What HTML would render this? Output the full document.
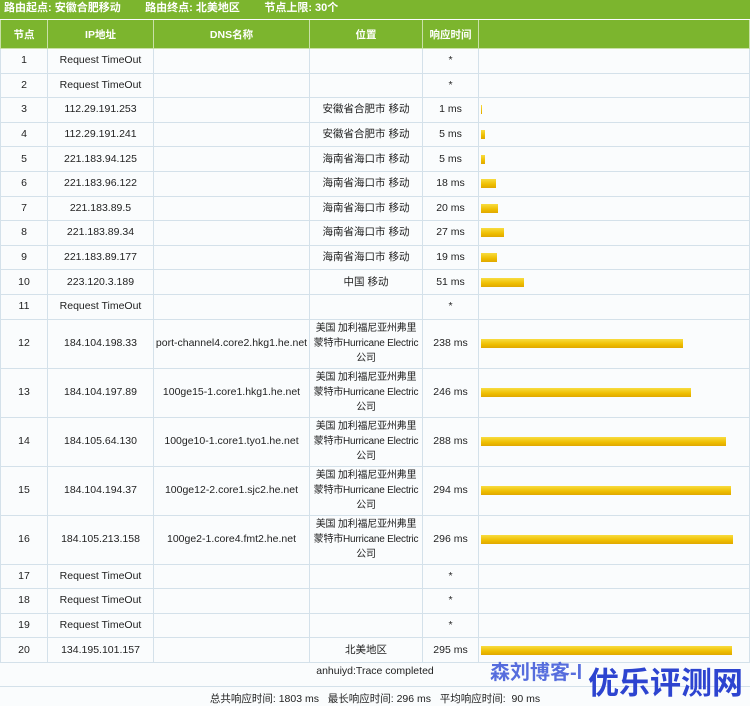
<!DOCTYPE html>
<html><head><meta charset="utf-8"><style>
body{margin:0;width:750px;height:706px;overflow:hidden;background:#fafcfd;font-family:"Liberation Sans","Noto Sans CJK SC",sans-serif;font-size:10.5px;color:#222;position:relative}
.top{height:19px;background:#7cb52e;color:#fff;font-weight:bold;font-size:11px;line-height:17px;padding-left:4px;white-space:pre}
table{position:absolute;top:20px;left:0;width:750px;border-collapse:collapse;table-layout:fixed}
th{background:#7cb52e;color:#fff;font-weight:bold;height:28px;border:1px solid #c9e0a8;border-top:none;font-size:10.5px;padding:0}
td{border:1px solid #d4e1ea;text-align:center;padding:0;line-height:15px;white-space:nowrap;overflow:hidden}
tr.s td{height:23.6px}
tr.b td{height:48px}
td.loc{font-size:10px;letter-spacing:-0.2px}
td.bar{text-align:left}
.g{display:block;height:9px;margin-left:2px;background:linear-gradient(#f8dc40,#eebe00 60%,#e0a800)}
.foot{position:absolute;left:0;width:750px;text-align:center;white-space:nowrap}
.wm1{position:absolute;left:490px;top:656px;color:#3a55d8;font-weight:bold;font-size:20px;opacity:.85;white-space:nowrap}
.wm2{position:absolute;left:588px;top:658px;color:#2d44d0;font-weight:bold;font-size:31px;white-space:nowrap}
</style></head><body>
<div class="top">路由起点: 安徽合肥移动        路由终点: 北美地区        节点上限: 30个</div>
<table>
<colgroup><col style="width:47px"><col style="width:106px"><col style="width:156px"><col style="width:113px"><col style="width:56px"><col></colgroup>
<tr><th>节点</th><th>IP地址</th><th>DNS名称</th><th>位置</th><th>响应时间</th><th></th></tr>
<tr class="s"><td>1</td><td>Request TimeOut</td><td></td><td></td><td>*</td><td></td></tr>
<tr class="s"><td>2</td><td>Request TimeOut</td><td></td><td></td><td>*</td><td></td></tr>
<tr class="s"><td>3</td><td>112.29.191.253</td><td></td><td>安徽省合肥市 移动</td><td>1 ms</td><td class="bar"><span class="g" style="width:1px"></span></td></tr>
<tr class="s"><td>4</td><td>112.29.191.241</td><td></td><td>安徽省合肥市 移动</td><td>5 ms</td><td class="bar"><span class="g" style="width:4px"></span></td></tr>
<tr class="s"><td>5</td><td>221.183.94.125</td><td></td><td>海南省海口市 移动</td><td>5 ms</td><td class="bar"><span class="g" style="width:4px"></span></td></tr>
<tr class="s"><td>6</td><td>221.183.96.122</td><td></td><td>海南省海口市 移动</td><td>18 ms</td><td class="bar"><span class="g" style="width:15px"></span></td></tr>
<tr class="s"><td>7</td><td>221.183.89.5</td><td></td><td>海南省海口市 移动</td><td>20 ms</td><td class="bar"><span class="g" style="width:17px"></span></td></tr>
<tr class="s"><td>8</td><td>221.183.89.34</td><td></td><td>海南省海口市 移动</td><td>27 ms</td><td class="bar"><span class="g" style="width:23px"></span></td></tr>
<tr class="s"><td>9</td><td>221.183.89.177</td><td></td><td>海南省海口市 移动</td><td>19 ms</td><td class="bar"><span class="g" style="width:16px"></span></td></tr>
<tr class="s"><td>10</td><td>223.120.3.189</td><td></td><td>中国 移动</td><td>51 ms</td><td class="bar"><span class="g" style="width:43px"></span></td></tr>
<tr class="s"><td>11</td><td>Request TimeOut</td><td></td><td></td><td>*</td><td></td></tr>
<tr class="b"><td>12</td><td>184.104.198.33</td><td>port-channel4.core2.hkg1.he.net</td><td class="loc">美国 加利福尼亚州弗里<br>蒙特市Hurricane Electric<br>公司</td><td>238 ms</td><td class="bar"><span class="g" style="width:202px"></span></td></tr>
<tr class="b"><td>13</td><td>184.104.197.89</td><td>100ge15-1.core1.hkg1.he.net</td><td class="loc">美国 加利福尼亚州弗里<br>蒙特市Hurricane Electric<br>公司</td><td>246 ms</td><td class="bar"><span class="g" style="width:210px"></span></td></tr>
<tr class="b"><td>14</td><td>184.105.64.130</td><td>100ge10-1.core1.tyo1.he.net</td><td class="loc">美国 加利福尼亚州弗里<br>蒙特市Hurricane Electric<br>公司</td><td>288 ms</td><td class="bar"><span class="g" style="width:245px"></span></td></tr>
<tr class="b"><td>15</td><td>184.104.194.37</td><td>100ge12-2.core1.sjc2.he.net</td><td class="loc">美国 加利福尼亚州弗里<br>蒙特市Hurricane Electric<br>公司</td><td>294 ms</td><td class="bar"><span class="g" style="width:250px"></span></td></tr>
<tr class="b"><td>16</td><td>184.105.213.158</td><td>100ge2-1.core4.fmt2.he.net</td><td class="loc">美国 加利福尼亚州弗里<br>蒙特市Hurricane Electric<br>公司</td><td>296 ms</td><td class="bar"><span class="g" style="width:252px"></span></td></tr>
<tr class="s"><td>17</td><td>Request TimeOut</td><td></td><td></td><td>*</td><td></td></tr>
<tr class="s"><td>18</td><td>Request TimeOut</td><td></td><td></td><td>*</td><td></td></tr>
<tr class="s"><td>19</td><td>Request TimeOut</td><td></td><td></td><td>*</td><td></td></tr>
<tr class="s"><td>20</td><td>134.195.101.157</td><td></td><td>北美地区</td><td>295 ms</td><td class="bar"><span class="g" style="width:251px"></span></td></tr>
</table>
<div class="foot" style="top:665px">anhuiyd:Trace completed</div>
<div class="foot" style="top:686px;border-top:1px solid #d4e1ea;padding-top:4px">总共响应时间: 1803 ms &nbsp; 最长响应时间: 296 ms &nbsp; 平均响应时间: &nbsp;90 ms</div>
<div class="wm1">森刘博客-l</div>
<div class="wm2">优乐评测网</div>
</body></html>
